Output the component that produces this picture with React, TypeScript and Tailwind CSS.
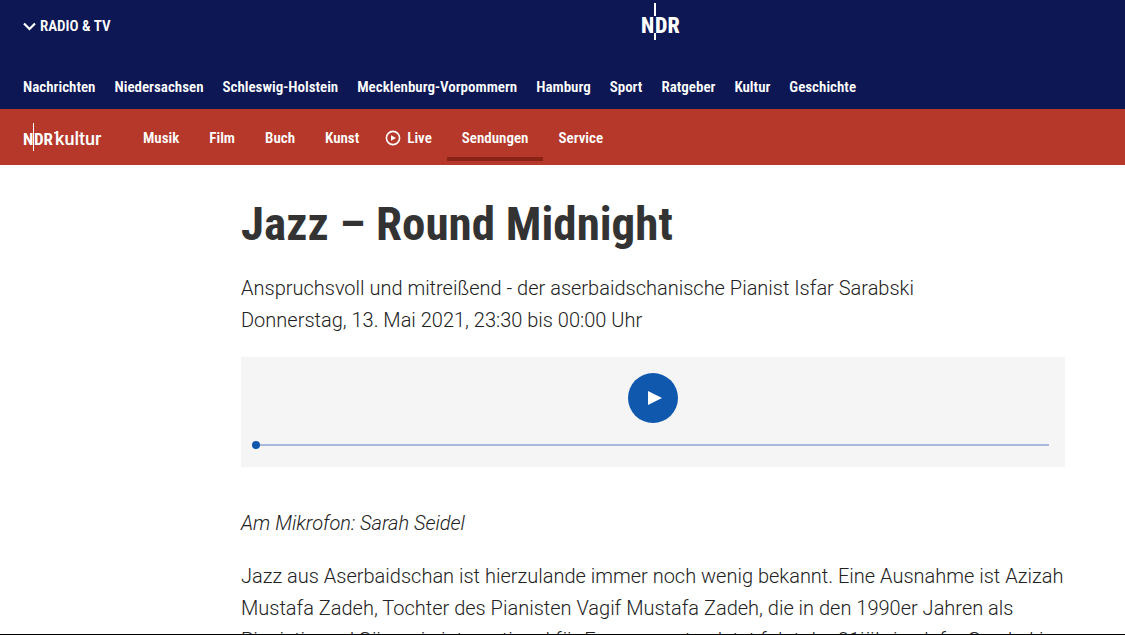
import React from "react";

const topLinks = [
  "Nachrichten",
  "Niedersachsen",
  "Schleswig-Holstein",
  "Mecklenburg-Vorpommern",
  "Hamburg",
  "Sport",
  "Ratgeber",
  "Kultur",
  "Geschichte",
];

const kulturLinks = [
  { label: "Musik" },
  { label: "Film" },
  { label: "Buch" },
  { label: "Kunst" },
  { label: "Live", live: true },
  { label: "Sendungen", active: true },
  { label: "Service" },
];

function NdrLogo() {
  return (
    <svg width="40" height="38" viewBox="0 0 40 38" role="img" aria-label="NDR">
      <text
        y="31"
        fill="#fff"
        className="font-['Roboto_Condensed',sans-serif] text-[22px] font-extrabold"
      >
        <tspan x="0">N</tspan>
        <tspan x="14">DR</tspan>
      </text>
      <path d="M13 15v17" stroke="#0c1754" strokeWidth="1" />
      <rect x="13" y="1" width="2" height="13" fill="#fff" />
      <rect x="13" y="31" width="2" height="7" fill="#fff" />
    </svg>
  );
}

function KulturLogo() {
  return (
    <svg width="81" height="30" viewBox="0 0 81 30" role="img" aria-label="NDR kultur">
      <text
        y="23"
        fill="#fff"
        className="font-['Roboto_Condensed',sans-serif] text-[17px] font-bold"
      >
        <tspan x="0">N</tspan>
        <tspan x="11">DR</tspan>
      </text>
      <rect x="10" y="1" width="1" height="28" fill="#fff" />
      <path d="M31 10.800h3" fill="none" stroke="#fff" strokeWidth="1.600" />
      <text
        x="32"
        y="23"
        fill="#fff"
        className="font-['Roboto',sans-serif] text-[18px] font-medium"
      >
        kultur
      </text>
    </svg>
  );
}

function LiveIcon() {
  return (
    <svg width="16" height="16" viewBox="0 0 16 16" aria-hidden="true">
      <circle cx="8" cy="8" r="6.600" fill="none" stroke="#fff" strokeWidth="1.600" />
      <path d="M6 5.200v5.600l5-2.800z" fill="#fff" />
    </svg>
  );
}

function Header() {
  return (
    <header className="shrink-0 font-['Roboto_Condensed',sans-serif] text-[15px] leading-6 font-semibold text-white">
      <div className="bg-[#0c1754] px-[23px]">
        <div className="grid grid-cols-[1fr_auto_1fr] items-start pt-0.5">
          <button className="mt-3 flex items-center gap-1 justify-self-start">
            <svg width="13" height="9" viewBox="0 0 13 9" aria-hidden="true">
              <path d="M1 1.500l5.500 5.500L12 1.500" fill="none" stroke="#fff" strokeWidth="2.200" />
            </svg>
            RADIO &amp; TV
          </button>
          <a href="#ndr" className="ml-[197px]">
            <NdrLogo />
          </a>
        </div>
        <nav className="flex gap-[19px] pt-[35px] pb-[10px] whitespace-nowrap">
          {topLinks.map((label) => (
            <a key={label} href="#">
              {label}
            </a>
          ))}
        </nav>
      </div>

      <nav className="flex h-14 items-stretch bg-[#b5382a] pl-[23px] whitespace-nowrap">
        <a href="#kultur" className="mr-6 pt-[13px]">
          <KulturLogo />
        </a>
        {kulturLinks.map(({ label, live, active }) => (
          <a
            key={label}
            href="#"
            className={
              active
                ? "mb-1 flex items-center border-b-4 border-[#8a2216] px-[15px] pt-2.5"
                : "mb-1 flex items-center border-b-4 border-transparent px-[15px] pt-2.5"
            }
          >
            {live && (
              <span className="mr-1.5 -ml-1">
                <LiveIcon />
              </span>
            )}
            {label}
          </a>
        ))}
      </nav>
    </header>
  );
}

function Player() {
  return (
    <section aria-label="Audio" className="bg-[#f5f5f5] pt-4 pr-4 pb-[18px] pl-[11px]">
      <div className="flex justify-center pl-[5px]">
        <button
          aria-label="Abspielen"
          className="flex size-[50px] items-center justify-center rounded-full bg-[#1058ae]"
        >
          <svg width="18" height="16" viewBox="0 0 18 16" aria-hidden="true">
            <path d="M4 1v14l14-7z" fill="#fff" />
          </svg>
        </button>
      </div>
      <input
        type="range"
        aria-label="Position"
        min={0}
        max={100}
        defaultValue={0}
        className="mt-[18px] block h-2 w-full appearance-none bg-[linear-gradient(#a9b9dd,#a9b9dd)] bg-[length:100%_2px] bg-center bg-no-repeat [&::-webkit-slider-thumb]:size-2 [&::-webkit-slider-thumb]:appearance-none [&::-webkit-slider-thumb]:rounded-full [&::-webkit-slider-thumb]:bg-[#1058ae]"
      />
    </section>
  );
}

export default function App() {
  return (
    <div className="flex h-screen flex-col bg-white">
      <Header />
      <main className="min-h-0 flex-1 overflow-hidden pt-7 pr-[60px] pl-[241px] font-['Roboto',sans-serif] text-xl leading-8 font-light text-[#222]">
        <h1 className="font-['Roboto_Condensed',sans-serif] text-[47px] leading-[62px] font-bold text-[#333]">
          Jazz – Round Midnight
        </h1>
        <p className="mt-[17px] mb-[21px]">
          Anspruchsvoll und mitreißend - der aserbaidschanische Pianist Isfar Sarabski
          <br />
          Donnerstag, 13. Mai 2021, 23:30 bis 00:00 Uhr
        </p>
        <Player />
        <p className="mt-10 italic">Am Mikrofon: Sarah Seidel</p>
        <p className="mt-[21px] whitespace-nowrap">
          Jazz aus Aserbaidschan ist hierzulande immer noch wenig bekannt. Eine Ausnahme ist Azizah
          <br />
          Mustafa Zadeh, Tochter des Pianisten Vagif Mustafa Zadeh, die in den 1990er Jahren als
          <br />
          Pianistin und Sängerin international für Furore sorgte. Jetzt folgt der 31jährige Isfar Sarabski
        </p>
      </main>
      <div className="h-px shrink-0 bg-black" />
    </div>
  );
}
